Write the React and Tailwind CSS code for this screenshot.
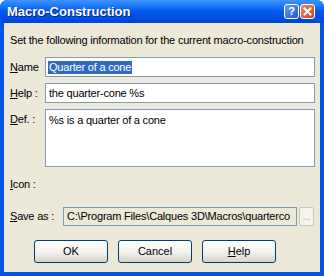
const font = { fontFamily: '"Liberation Sans", Arial, sans-serif' };

const Mn = ({ children }) => <span className="underline underline-offset-[1px]">{children}</span>;

const XpButton = ({ children }) => (
  <button className="w-[74px] h-[23px] rounded-[3px] border border-[#003C74] bg-gradient-to-b from-white via-[#F4F3EE] to-[#D8D4C8] text-[11px] text-black">
    {children}
  </button>
);

export default function App() {
  return (
    <div className="w-[324px] h-[276px] bg-white" style={font}>
      <div className="w-full h-full flex flex-col rounded-t-[7px] bg-[#0055E5] overflow-hidden">
        <div className="h-[23px] flex items-center pl-[7px] pr-[9px] bg-gradient-to-b from-[#3D95FF] via-[#0058EE] to-[#0046D6]">
          <span className="flex-1 text-white font-bold text-[13px] [text-shadow:1px_1px_0_#0A1E8C]">
            Macro-Construction
          </span>
          <div className="flex gap-[1px]">
            <div className="w-[15px] h-[15px] rounded-[3px] border border-white bg-gradient-to-br from-[#6A9CF7] to-[#2356D4] flex items-center justify-center text-white text-[11px] font-bold leading-none">
              ?
            </div>
            <div className="w-[15px] h-[15px] rounded-[3px] border border-white bg-gradient-to-br from-[#EE8B6B] to-[#C8401A] flex items-center justify-center">
              <svg width="9" height="9" viewBox="0 0 9 9">
                <path d="M1.5 1.5 L7.5 7.5 M7.5 1.5 L1.5 7.5" stroke="white" strokeWidth="2" strokeLinecap="square" />
              </svg>
            </div>
          </div>
        </div>
        <div className="flex-1 mx-[4px] mb-[4px] bg-[#ECE9D8] flex flex-col pl-[6px] pr-[5px] text-[11px] text-black leading-[13px] tracking-[-0.2px]">
          <p className="mt-[11px] whitespace-nowrap">Set the following information for the current macro-construction</p>
          <div className="mt-[10px] flex items-center">
            <span className="w-[35px]"><Mn>N</Mn>ame</span>
            <div className="flex-1 h-[20px] border border-[#7F9DB9] bg-white flex items-center pl-[2px]">
              <span className="bg-[#316AC5] text-white px-[1px]">Quarter of a cone</span>
            </div>
          </div>
          <div className="mt-[6px] flex items-center">
            <span className="w-[35px]"><Mn>H</Mn>elp :</span>
            <div className="flex-1 h-[20px] border border-[#7F9DB9] bg-white flex items-center pl-[3px]">
              the quarter-cone %s
            </div>
          </div>
          <div className="mt-[6px] flex items-start">
            <span className="w-[35px] pt-[4px]"><Mn>D</Mn>ef. :</span>
            <div className="flex-1 h-[58px] border border-[#7F9DB9] bg-white pl-[3px] pt-[4px]">
              %s is a quarter of a cone
            </div>
          </div>
          <div className="mt-[11px]">
            <Mn>I</Mn>con :
          </div>
          <div className="mt-[16px] flex items-center">
            <span className="w-[53px]"><Mn>S</Mn>ave as :</span>
            <div className="w-[234px] h-[19px] border border-[#7F9DB9] bg-[#ECE9D8] flex items-center pl-[3px] overflow-hidden whitespace-nowrap">
              C:\Program Files\Calques 3D\Macros\quarterco
            </div>
            <div className="ml-[2px] w-[15px] h-[19px] rounded-[2px] border border-[#C9C7BA] bg-[#F5F4EA] text-[#ACA899] flex items-center justify-center text-[10px]">
              ...
            </div>
          </div>
          <div className="mt-[14px] flex gap-[10px] pl-[24px] tracking-normal">
            <XpButton>OK</XpButton>
            <XpButton>Cancel</XpButton>
            <XpButton><Mn>H</Mn>elp</XpButton>
          </div>
        </div>
      </div>
    </div>
  );
}
